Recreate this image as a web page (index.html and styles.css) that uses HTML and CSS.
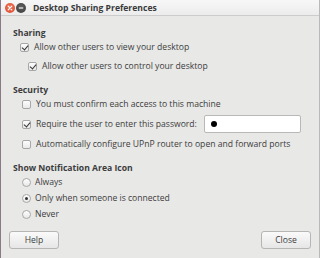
FILE: index.html
```html
<!DOCTYPE html>
<html>
<head>
<meta charset="utf-8">
<link rel="stylesheet" href="styles.css">
</head>
<body>
<div class="window">
  <div class="titlebar">
    <span class="wbtn wclose"><svg width="10" height="10" viewBox="0 0 10 10"><path d="M3.2 3.2 L6.8 6.8 M6.8 3.2 L3.2 6.8" stroke="#fff" stroke-width="1.2" stroke-linecap="round"/></svg></span>
    <span class="wbtn wmin"><svg width="10" height="10" viewBox="0 0 10 10"><path d="M2.8 5 H7.2" stroke="#ddd" stroke-width="1.4"/></svg></span>
    <span class="title">Desktop Sharing Preferences</span>
  </div>
  <div class="content">
    <div class="section">
      <div class="heading">Sharing</div>
      <div class="rows rows-sharing">
        <label class="row ind1"><span class="check on"></span>Allow other users to view your desktop</label>
        <label class="row ind2"><span class="check on"></span>Allow other users to control your desktop</label>
      </div>
    </div>
    <div class="section">
      <div class="heading">Security</div>
      <div class="rows rows-security">
        <label class="row ind1b"><span class="check"></span>You must confirm each access to this machine</label>
        <div class="row pw ind1b"><span class="check on"></span>Require the user to enter this password:<span class="input"><span class="dot"></span></span></div>
        <label class="row ind1b"><span class="check"></span>Automatically configure UPnP router to open and forward ports</label>
      </div>
    </div>
    <div class="section">
      <div class="heading">Show Notification Area Icon</div>
      <div class="rows rows-radio">
        <label class="row ind1b"><span class="radio"></span>Always</label>
        <label class="row ind1b"><span class="radio on"></span>Only when someone is connected</label>
        <label class="row ind1b"><span class="radio"></span>Never</label>
      </div>
    </div>
  </div>
  <div class="buttons">
    <span class="button">Help</span>
    <span class="button">Close</span>
  </div>
</div>
</body>
</html>
```
FILE: styles.css
```css
* { box-sizing: border-box; }
html, body { margin: 0; padding: 0; }
body {
  width: 320px; height: 258px; overflow: hidden;
  background: #e8e8e7;
  font-family: "Open Sans", "DejaVu Sans", sans-serif;
  font-size: 8.6px;
  color: #3c3c3c;
}
.window {
  width: 320px; height: 258px;
  border-left: 1px solid #8a7a88;
  border-right: 1px solid #b9b9b9;
  display: flex; flex-direction: column;
}
.titlebar {
  height: 16px;
  background: linear-gradient(#f7f7f7, #ececec);
  border-bottom: 1px solid #cccccc;
  display: flex; align-items: center;
  padding-left: 4px;
}
.wbtn {
  width: 10px; height: 10px; border-radius: 50%;
  display: flex; margin-right: 1px;
}
.wclose { background: radial-gradient(circle at 50% 40%, #f07a5c, #d9432a); }
.wmin { background: radial-gradient(circle at 50% 40%, #606060, #3a3a3a); }
.title {
  margin-left: 6px;
  font-weight: bold; font-size: 8.6px; color: #3a3a3a;
}
.content {
  padding: 10px 0 0 12px;
  display: flex; flex-direction: column; gap: 10px;
}
.heading { font-weight: bold; height: 14px; line-height: 14px; }
.rows { display: flex; flex-direction: column; }
.rows-sharing { gap: 5px; }
.rows-security { gap: 4px; }
.rows-radio { gap: 2px; }
.row { display: flex; align-items: center; height: 14px; line-height: 14px; }
.row.pw { height: 18px; }
.ind1 { padding-left: 7px; }
.ind2 { padding-left: 15px; }
.ind1b { padding-left: 9px; }
.check {
  width: 9px; height: 9px; margin-right: 5px;
  border: 1px solid #a7a7a7; border-radius: 2px;
  background: linear-gradient(#fdfdfd, #e9e9e9);
  position: relative;
}
.check.on::after {
  content: ""; position: absolute; left: 2px; top: 0px;
  width: 3px; height: 5px;
  border-right: 1.6px solid #333; border-bottom: 1.6px solid #333;
  transform: rotate(40deg);
}
.radio {
  width: 9px; height: 9px; margin-right: 4px;
  border: 1px solid #a7a7a7; border-radius: 50%;
  background: linear-gradient(#fdfdfd, #e9e9e9);
  display: flex; align-items: center; justify-content: center;
}
.radio.on::after {
  content: ""; width: 3px; height: 3px; border-radius: 50%; background: #333;
}
.input {
  margin-left: 7px;
  width: 97px; height: 18px;
  background: #fff; border: 1px solid #b8b8b8; border-radius: 2px;
  display: flex; align-items: center; padding-left: 6px;
}
.dot { width: 6px; height: 6px; border-radius: 50%; background: #000; }
.buttons {
  margin-top: auto; margin-bottom: 9px;
  display: flex; justify-content: space-between;
  padding: 0 8px 0 8px;
}
.button {
  width: 50px; height: 18px;
  border: 1px solid #b5b5b5; border-radius: 3px;
  background: linear-gradient(#fafafa, #e6e6e6);
  display: flex; align-items: center; justify-content: center;
}
```
